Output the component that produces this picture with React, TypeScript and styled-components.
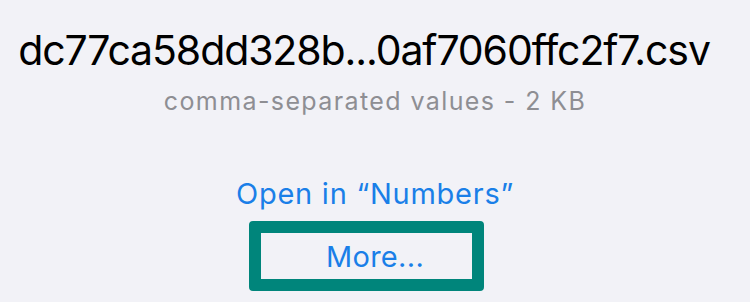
import React from 'react';
import styled, { createGlobalStyle } from 'styled-components';

const GlobalStyle = createGlobalStyle`
  html, body {
    margin: 0;
    padding: 0;
    background: #f2f2f7;
  }
  body {
    font-family: Inter, "Liberation Sans", sans-serif;
    -webkit-font-smoothing: antialiased;
  }
`;

const Sheet = styled.div`
  width: 750px;
  height: 302px;
  box-sizing: border-box;
  padding-top: 26px;
  display: flex;
  flex-direction: column;
  align-items: center;
  background: #f2f2f7;
  overflow: hidden;
`;

const FileName = styled.div`
  font-size: 41px;
  line-height: 48px;
  letter-spacing: -1.1px;
  color: #000;
  white-space: nowrap;
  margin-right: 22px;
`;

const FileMeta = styled.div`
  margin-top: 12px;
  font-size: 25px;
  line-height: 30px;
  letter-spacing: 1.4px;
  color: #8e8e93;
`;

const ActionLink = styled.div`
  margin-top: 60px;
  font-size: 29px;
  line-height: 36px;
  letter-spacing: 0.75px;
  color: #1a7fe8;
  cursor: pointer;
`;

const HighlightedAction = styled.div`
  margin-top: 9px;
  margin-right: 17px;
  width: 235px;
  height: 70px;
  box-sizing: border-box;
  border: 12px solid #00857b;
  border-radius: 4px;
  display: flex;
  align-items: center;
  justify-content: center;
  padding-left: 17px;
  font-size: 29px;
  letter-spacing: 0.3px;
  color: #1a7fe8;
  cursor: pointer;
`;

export default function App() {
  return (
    <>
      <GlobalStyle />
      <Sheet>
        <FileName>dc77ca58dd328b...0af7060ffc2f7.csv</FileName>
        <FileMeta>comma-separated values - 2 KB</FileMeta>
        <ActionLink>Open in “Numbers”</ActionLink>
        <HighlightedAction>More...</HighlightedAction>
      </Sheet>
    </>
  );
}
